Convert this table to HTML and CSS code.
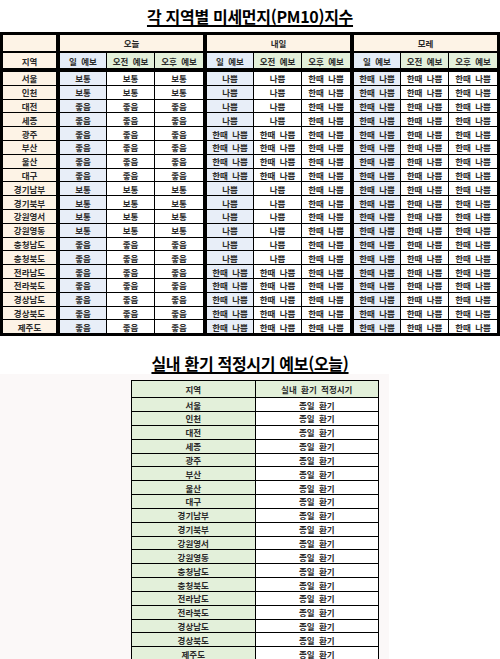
FILE: index.html
```html
<!DOCTYPE html>
<html lang="ko">
<head>
<meta charset="utf-8">
<title>미세먼지 지수</title>
<link rel="stylesheet" href="styles.css">
</head>
<body>
<h1 class="title">각 지역별 미세먼지(PM10)지수</h1>
<table class="forecast">
  <colgroup>
    <col class="w-reg"><col class="w-start"><col class="w-mid"><col class="w-wide">
    <col class="w-start"><col class="w-mid"><col class="w-wide">
    <col class="w-start"><col class="w-mid"><col class="w-wide">
  </colgroup>
  <thead>
    <tr class="h1">
      <th class="c"></th>
      <th class="c sep" colspan="3">오늘</th>
      <th class="c sep" colspan="3">내일</th>
      <th class="c sep" colspan="3">모레</th>
    </tr>
    <tr class="h2">
      <th class="c">지역</th>
      <th class="hb sep">일 예보</th><th class="g">오전 예보</th><th class="g">오후 예보</th>
      <th class="hb sep">일 예보</th><th class="g">오전 예보</th><th class="g">오후 예보</th>
      <th class="hb sep">일 예보</th><th class="g">오전 예보</th><th class="g">오후 예보</th>
    </tr>
  </thead>
  <tbody>
    <tr><th class="c">서울</th><td class="b sep">보통</td><td>보통</td><td>보통</td><td class="b sep">나쁨</td><td>나쁨</td><td>한때 나쁨</td><td class="b sep">한때 나쁨</td><td>한때 나쁨</td><td>한때 나쁨</td></tr>
    <tr><th class="c">인천</th><td class="b sep">보통</td><td>보통</td><td>보통</td><td class="b sep">나쁨</td><td>나쁨</td><td>한때 나쁨</td><td class="b sep">한때 나쁨</td><td>한때 나쁨</td><td>한때 나쁨</td></tr>
    <tr><th class="c">대전</th><td class="b sep">좋음</td><td>좋음</td><td>좋음</td><td class="b sep">나쁨</td><td>나쁨</td><td>한때 나쁨</td><td class="b sep">한때 나쁨</td><td>한때 나쁨</td><td>한때 나쁨</td></tr>
    <tr><th class="c">세종</th><td class="b sep">좋음</td><td>좋음</td><td>좋음</td><td class="b sep">나쁨</td><td>나쁨</td><td>한때 나쁨</td><td class="b sep">한때 나쁨</td><td>한때 나쁨</td><td>한때 나쁨</td></tr>
    <tr><th class="c">광주</th><td class="b sep">좋음</td><td>좋음</td><td>좋음</td><td class="b sep">한때 나쁨</td><td>한때 나쁨</td><td>한때 나쁨</td><td class="b sep">한때 나쁨</td><td>한때 나쁨</td><td>한때 나쁨</td></tr>
    <tr><th class="c">부산</th><td class="b sep">좋음</td><td>좋음</td><td>좋음</td><td class="b sep">한때 나쁨</td><td>한때 나쁨</td><td>한때 나쁨</td><td class="b sep">한때 나쁨</td><td>한때 나쁨</td><td>한때 나쁨</td></tr>
    <tr><th class="c">울산</th><td class="b sep">좋음</td><td>좋음</td><td>좋음</td><td class="b sep">한때 나쁨</td><td>한때 나쁨</td><td>한때 나쁨</td><td class="b sep">한때 나쁨</td><td>한때 나쁨</td><td>한때 나쁨</td></tr>
    <tr><th class="c">대구</th><td class="b sep">좋음</td><td>좋음</td><td>좋음</td><td class="b sep">한때 나쁨</td><td>한때 나쁨</td><td>한때 나쁨</td><td class="b sep">한때 나쁨</td><td>한때 나쁨</td><td>한때 나쁨</td></tr>
    <tr><th class="c">경기남부</th><td class="b sep">보통</td><td>보통</td><td>보통</td><td class="b sep">나쁨</td><td>나쁨</td><td>한때 나쁨</td><td class="b sep">한때 나쁨</td><td>한때 나쁨</td><td>한때 나쁨</td></tr>
    <tr><th class="c">경기북부</th><td class="b sep">보통</td><td>보통</td><td>보통</td><td class="b sep">나쁨</td><td>나쁨</td><td>한때 나쁨</td><td class="b sep">한때 나쁨</td><td>한때 나쁨</td><td>한때 나쁨</td></tr>
    <tr><th class="c">강원영서</th><td class="b sep">보통</td><td>보통</td><td>보통</td><td class="b sep">나쁨</td><td>나쁨</td><td>한때 나쁨</td><td class="b sep">한때 나쁨</td><td>한때 나쁨</td><td>한때 나쁨</td></tr>
    <tr><th class="c">강원영동</th><td class="b sep">보통</td><td>보통</td><td>보통</td><td class="b sep">나쁨</td><td>나쁨</td><td>한때 나쁨</td><td class="b sep">한때 나쁨</td><td>한때 나쁨</td><td>한때 나쁨</td></tr>
    <tr><th class="c">충청남도</th><td class="b sep">좋음</td><td>좋음</td><td>좋음</td><td class="b sep">나쁨</td><td>나쁨</td><td>한때 나쁨</td><td class="b sep">한때 나쁨</td><td>한때 나쁨</td><td>한때 나쁨</td></tr>
    <tr><th class="c">충청북도</th><td class="b sep">좋음</td><td>좋음</td><td>좋음</td><td class="b sep">나쁨</td><td>나쁨</td><td>한때 나쁨</td><td class="b sep">한때 나쁨</td><td>한때 나쁨</td><td>한때 나쁨</td></tr>
    <tr><th class="c">전라남도</th><td class="b sep">좋음</td><td>좋음</td><td>좋음</td><td class="b sep">한때 나쁨</td><td>한때 나쁨</td><td>한때 나쁨</td><td class="b sep">한때 나쁨</td><td>한때 나쁨</td><td>한때 나쁨</td></tr>
    <tr><th class="c">전라북도</th><td class="b sep">좋음</td><td>좋음</td><td>좋음</td><td class="b sep">한때 나쁨</td><td>한때 나쁨</td><td>한때 나쁨</td><td class="b sep">한때 나쁨</td><td>한때 나쁨</td><td>한때 나쁨</td></tr>
    <tr><th class="c">경상남도</th><td class="b sep">좋음</td><td>좋음</td><td>좋음</td><td class="b sep">한때 나쁨</td><td>한때 나쁨</td><td>한때 나쁨</td><td class="b sep">한때 나쁨</td><td>한때 나쁨</td><td>한때 나쁨</td></tr>
    <tr><th class="c">경상북도</th><td class="b sep">좋음</td><td>좋음</td><td>좋음</td><td class="b sep">한때 나쁨</td><td>한때 나쁨</td><td>한때 나쁨</td><td class="b sep">한때 나쁨</td><td>한때 나쁨</td><td>한때 나쁨</td></tr>
    <tr><th class="c">제주도</th><td class="b sep">좋음</td><td>좋음</td><td>좋음</td><td class="b sep">한때 나쁨</td><td>한때 나쁨</td><td>한때 나쁨</td><td class="b sep">한때 나쁨</td><td>한때 나쁨</td><td>한때 나쁨</td></tr>
  </tbody>
</table>

<h2 class="title title-vent">실내 환기 적정시기 예보(오늘)</h2>
<div class="vent-area">
  <table class="vent">
    <thead>
      <tr><th>지역</th><th>실내 환기 적정시기</th></tr>
    </thead>
    <tbody>
      <tr><th>서울</th><td>종일 환기</td></tr>
      <tr><th>인천</th><td>종일 환기</td></tr>
      <tr><th>대전</th><td>종일 환기</td></tr>
      <tr><th>세종</th><td>종일 환기</td></tr>
      <tr><th>광주</th><td>종일 환기</td></tr>
      <tr><th>부산</th><td>종일 환기</td></tr>
      <tr><th>울산</th><td>종일 환기</td></tr>
      <tr><th>대구</th><td>종일 환기</td></tr>
      <tr><th>경기남부</th><td>종일 환기</td></tr>
      <tr><th>경기북부</th><td>종일 환기</td></tr>
      <tr><th>강원영서</th><td>종일 환기</td></tr>
      <tr><th>강원영동</th><td>종일 환기</td></tr>
      <tr><th>충청남도</th><td>종일 환기</td></tr>
      <tr><th>충청북도</th><td>종일 환기</td></tr>
      <tr><th>전라남도</th><td>종일 환기</td></tr>
      <tr><th>전라북도</th><td>종일 환기</td></tr>
      <tr><th>경상남도</th><td>종일 환기</td></tr>
      <tr><th>경상북도</th><td>종일 환기</td></tr>
      <tr><th>제주도</th><td>종일 환기</td></tr>
    </tbody>
  </table>
</div>
</body>
</html>
```

FILE: styles.css
```css
html, body {
  margin: 0;
  padding: 0;
  background: #ffffff;
}

body {
  width: 500px;
  height: 659px;
  overflow: hidden;
  font-family: "Noto Sans CJK KR", "Noto Sans", sans-serif;
  color: #1a1a1a;
}

.title {
  margin: 0;
  box-sizing: border-box;
  height: 32px;
  padding-top: 6px;
  text-align: center;
  font-size: 16px;
  line-height: 20px;
  font-weight: 700;
  letter-spacing: -0.3px;
  color: #000;
  text-decoration: underline;
  text-decoration-thickness: 2px;
  text-underline-offset: 2px;
}

/* ---------- top table ---------- */
.forecast {
  width: 500px;
  table-layout: fixed;
  border-collapse: separate;
  border-spacing: 1px;
  border: 2px solid #000;
  background: #000;
  font-size: 8.5px;
  word-spacing: 2px;
}

.w-reg { width: 53px; }
.w-start { width: 49px; }
.w-mid { width: 47px; }
.w-wide { width: 48px; }

.forecast th,
.forecast td {
  padding: 0;
  height: 12.8px;
  line-height: 12px;
  text-align: center;
  white-space: nowrap;
  overflow: hidden;
  font-weight: 700;
  color: #2a2a2a;
  background: #ffffff;
}

.forecast .h1 th {
  height: 16px;
  border-bottom: 1px solid #000;
}

.forecast .h2 th {
  height: 15px;
  border-bottom: 3px solid #000;
}

.forecast .sep {
  border-left: 3px solid #000;
}

.forecast .c { background: #fdf3e6; }
.forecast .b { background: #e8eef8; }
.forecast .hb { background: #e4ecf7; }
.forecast .g { background: #e3f0da; }

/* ---------- bottom section ---------- */
.title-vent {
  height: 38px;
  padding-top: 17px;
}

.vent-area {
  box-sizing: border-box;
  width: 389px;
  height: 285px;
  padding-top: 6px;
  background: #fbf8f8;
  overflow: hidden;
}

.vent {
  margin-left: 131px;
  width: 248px;
  table-layout: fixed;
  border-collapse: collapse;
  font-size: 8.5px;
  word-spacing: 2px;
}

.vent th,
.vent td {
  padding: 0;
  height: 12.85px;
  line-height: 12px;
  border: 1px solid #000;
  text-align: center;
  white-space: nowrap;
  font-weight: 700;
  color: #2a2a2a;
  background: #ffffff;
}

.vent thead th {
  height: 16px;
  background: #e3f0da;
}

.vent tbody th {
  background: #e3f0da;
}
```
